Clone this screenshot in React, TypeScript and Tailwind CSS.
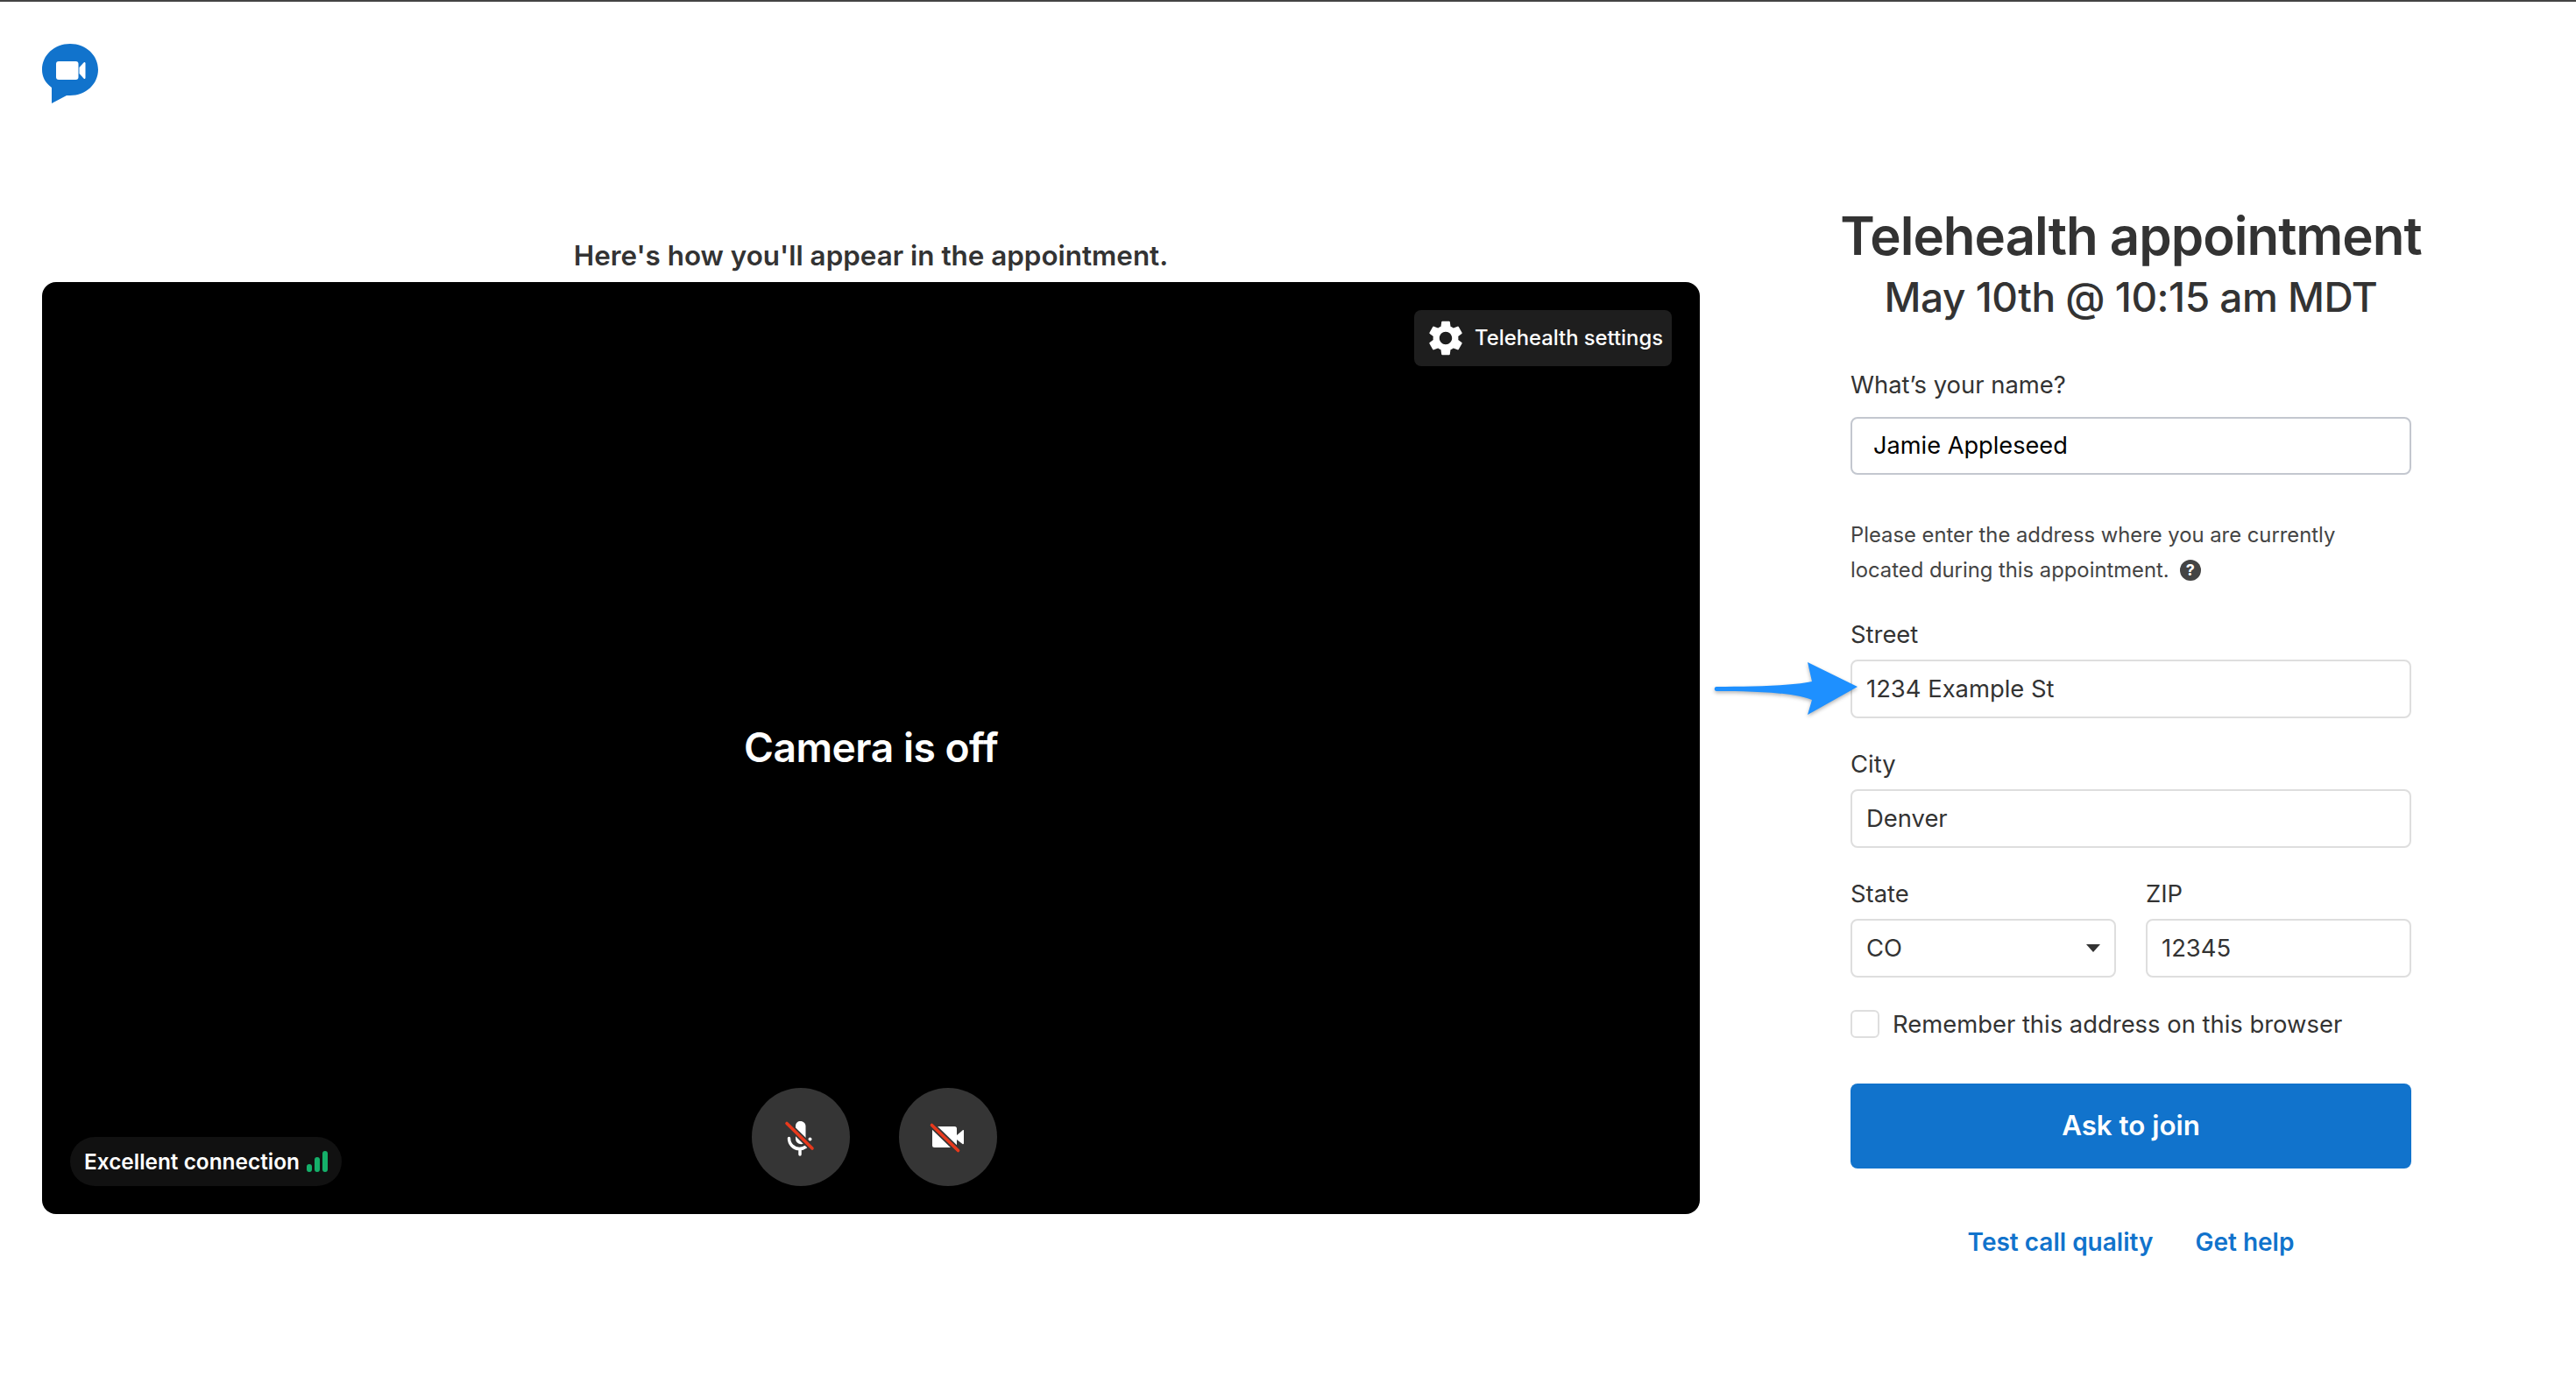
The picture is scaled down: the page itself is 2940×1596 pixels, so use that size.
import { MdSettings } from 'react-icons/md'

function Logo() {
  return (
    <svg width="64" height="68" viewBox="0 0 64 68" className="block">
      <path d="M11 50 C3.500 44.500 0 37.500 0 29.500 C0 13 14 0 32 0 C50 0 64 13 64 29.500 C64 46 50 59 32 59 C31 59 29.500 59 28 59 L11 68 Z" fill="#1173cc" />
      <rect x="16" y="20" width="25.500" height="21" rx="3" fill="#fff" />
      <path d="M42.500 27 L47.500 21.500 C48.500 20.500 49.500 21 49.500 22.500 L49.500 38.500 C49.500 40 48.500 40.500 47.500 39.500 L42.500 34 Z" fill="#fff" />
    </svg>
  )
}

function MicOff() {
  return (
    <svg width="48" height="48" viewBox="0 -3 48 48">
      <path d="M18 8.500 C18 5 20.500 3 23.500 3 C27 3 29.500 5.500 29.500 9 L29.500 24 L18 12 Z" fill="#fff" />
      <path d="M18 19 L27 28.500 C23.500 30.500 18 28 18 23 Z" fill="#fff" />
      <path d="M10.500 22.500 C10.500 29.500 16 34.500 22.500 34.500 C25.500 34.500 28 33.500 30 32" fill="none" stroke="#fff" strokeWidth="3.500" strokeLinecap="round" />
      <circle cx="34.500" cy="23.500" r="2" fill="#fff" />
      <path d="M23 34.500 L23 41" stroke="#fff" strokeWidth="3.500" strokeLinecap="round" />
      <path d="M7.500 5 L37.500 34.500" stroke="#353535" strokeWidth="7" />
      <path d="M8 5.500 L37 34" stroke="#e8391c" strokeWidth="3.600" strokeLinecap="round" />
    </svg>
  )
}

function CameraOff() {
  return (
    <svg width="48" height="48" viewBox="-2 0 48 48">
      <rect x="4" y="12" width="28" height="24" rx="2.500" fill="#fff" />
      <path d="M32 22 L38.500 16.500 C39.500 15.800 40 16 40 17.500 L40 31 C40 32 39.500 32.500 38.500 32 L32 27 Z" fill="#fff" />
      <path d="M3 10 L34 40" stroke="#353535" strokeWidth="7" />
      <path d="M3.500 10.500 L33.500 39.500" stroke="#e8391c" strokeWidth="3.600" strokeLinecap="round" />
    </svg>
  )
}

function SignalBars() {
  return (
    <span className="flex items-end gap-[3px] h-6">
      <span className="w-[6px] h-[9px] rounded-[3px] bg-[#15b06a]" />
      <span className="w-[6px] h-[17px] rounded-[3px] bg-[#15b06a]" />
      <span className="w-[6px] h-6 rounded-[3px] bg-[#15b06a]" />
    </span>
  )
}

function Field({ label, value, caret }: { label: string; value: string; caret?: boolean }) {
  return (
    <div>
      <div className="text-[27.4px] leading-[34px] text-[#333] mb-3">{label}</div>
      <div className="h-[67px] flex items-center justify-between pl-4 pr-4 rounded-lg border-2 border-[#dedede] text-[27.4px] text-[#333]">
        <span>{value}</span>
        {caret && <span className="w-0 h-0 border-x-8 border-t-[9px] border-x-transparent border-t-[#333]" />}
      </div>
    </div>
  )
}

export default function App() {
  return (
    <div className="min-h-[1596px] bg-white border-t-2 border-[#444] font-['Inter',sans-serif]">
      <header className="pl-12 pt-12">
        <Logo />
      </header>

      <main className="flex items-start pl-12">
        {/* Video preview */}
        <section className="w-[1892px] mt-[152px]">
          <p className="text-center text-[31.4px] leading-[44px] font-semibold text-[#333] mb-2">
            Here's how you'll appear in the appointment.
          </p>
          <div className="relative h-[1064px] bg-black rounded-2xl flex items-center justify-center">
            <span className="text-white text-[46.2px] font-semibold tracking-[-0.5px]">Camera is off</span>

            <button className="absolute top-8 right-8 h-16 w-[294px] flex items-center gap-[9px] pl-3 rounded-lg bg-[#1e1e1e] text-white text-[23.8px] font-medium">
              <MdSettings size={48} />
              Telehealth settings
            </button>

            <div className="absolute left-8 bottom-8 h-14 flex items-center gap-2 pl-4 pr-4 rounded-full bg-[#111] text-white text-[24.4px] font-semibold">
              Excellent connection
              <SignalBars />
            </div>

            <div className="absolute bottom-8 left-[810px] flex gap-14">
              <button className="w-28 h-28 rounded-full bg-[#353535] flex items-center justify-center">
                <MicOff />
              </button>
              <button className="w-28 h-28 rounded-full bg-[#353535] flex items-center justify-center">
                <CameraOff />
              </button>
            </div>
          </div>
        </section>

        {/* Join form */}
        <section className="w-[640px] ml-[172px] mt-[114px]">
          <div className="text-center text-[#333]">
            <h1 className="-mx-4 text-[60px] leading-[74px] font-semibold tracking-[-1px] whitespace-nowrap">Telehealth appointment</h1>
            <h2 className="text-[46px] leading-[66px] font-medium tracking-[-0.5px] whitespace-nowrap">May 10th @ 10:15 am MDT</h2>
          </div>

          <div className="mt-[50px]">
            <div className="text-[27.4px] leading-[34px] text-[#333] mb-5">What’s your name?</div>
            <div className="h-[66px] flex items-center pl-6 rounded-lg border-2 border-[#c3c7cf] text-[27.2px] text-black">
              Jamie Appleseed
            </div>
          </div>

          <div className="mt-[49px] text-[23.8px] leading-10 text-[#444]">
            <p>Please enter the address where you are currently</p>
            <p className="flex items-center gap-3">
              located during this appointment.
              <span className="inline-flex w-6 h-6 rounded-full bg-[#444] text-white text-[18px] leading-none font-bold items-center justify-center">?</span>
            </p>
          </div>

          <div className="relative mt-9">
            <Field label="Street" value="1234 Example St" />
            {/* annotation arrow */}
            <svg width="172" height="64" viewBox="0 0 172 64" className="absolute left-[-156px] top-[46px] drop-shadow-[0_2px_2px_rgba(0,0,0,0.3)]">
              <path d="M3 31 C40 31 90 30 112 25 L107 3 L164 31 L107 63 L112 46 C90 37 40 36 3 36 C0 36 0 31 3 31 Z" fill="#1e90ff" />
            </svg>
          </div>

          <div className="mt-[35px]">
            <Field label="City" value="Denver" />
          </div>

          <div className="mt-[35px] grid grid-cols-[303px_303px] gap-x-[34px]">
            <Field label="State" value="CO" caret />
            <Field label="ZIP" value="12345" />
          </div>

          <label className="mt-[37px] flex items-center gap-[15px] text-[27.4px] leading-8 text-[#333]">
            <span className="w-[33px] h-[32px] rounded-md border-2 border-[#dedede]" />
            Remember this address on this browser
          </label>

          <button className="mt-[52px] w-full h-[97px] rounded-lg bg-[#1173cc] text-white text-[31.3px] font-semibold">
            Ask to join
          </button>

          <div className="mt-[66px] flex justify-center gap-12 text-[#1173cc] text-[28px] font-semibold leading-9">
            <a>Test call quality</a>
            <a>Get help</a>
          </div>
        </section>
      </main>
    </div>
  )
}
